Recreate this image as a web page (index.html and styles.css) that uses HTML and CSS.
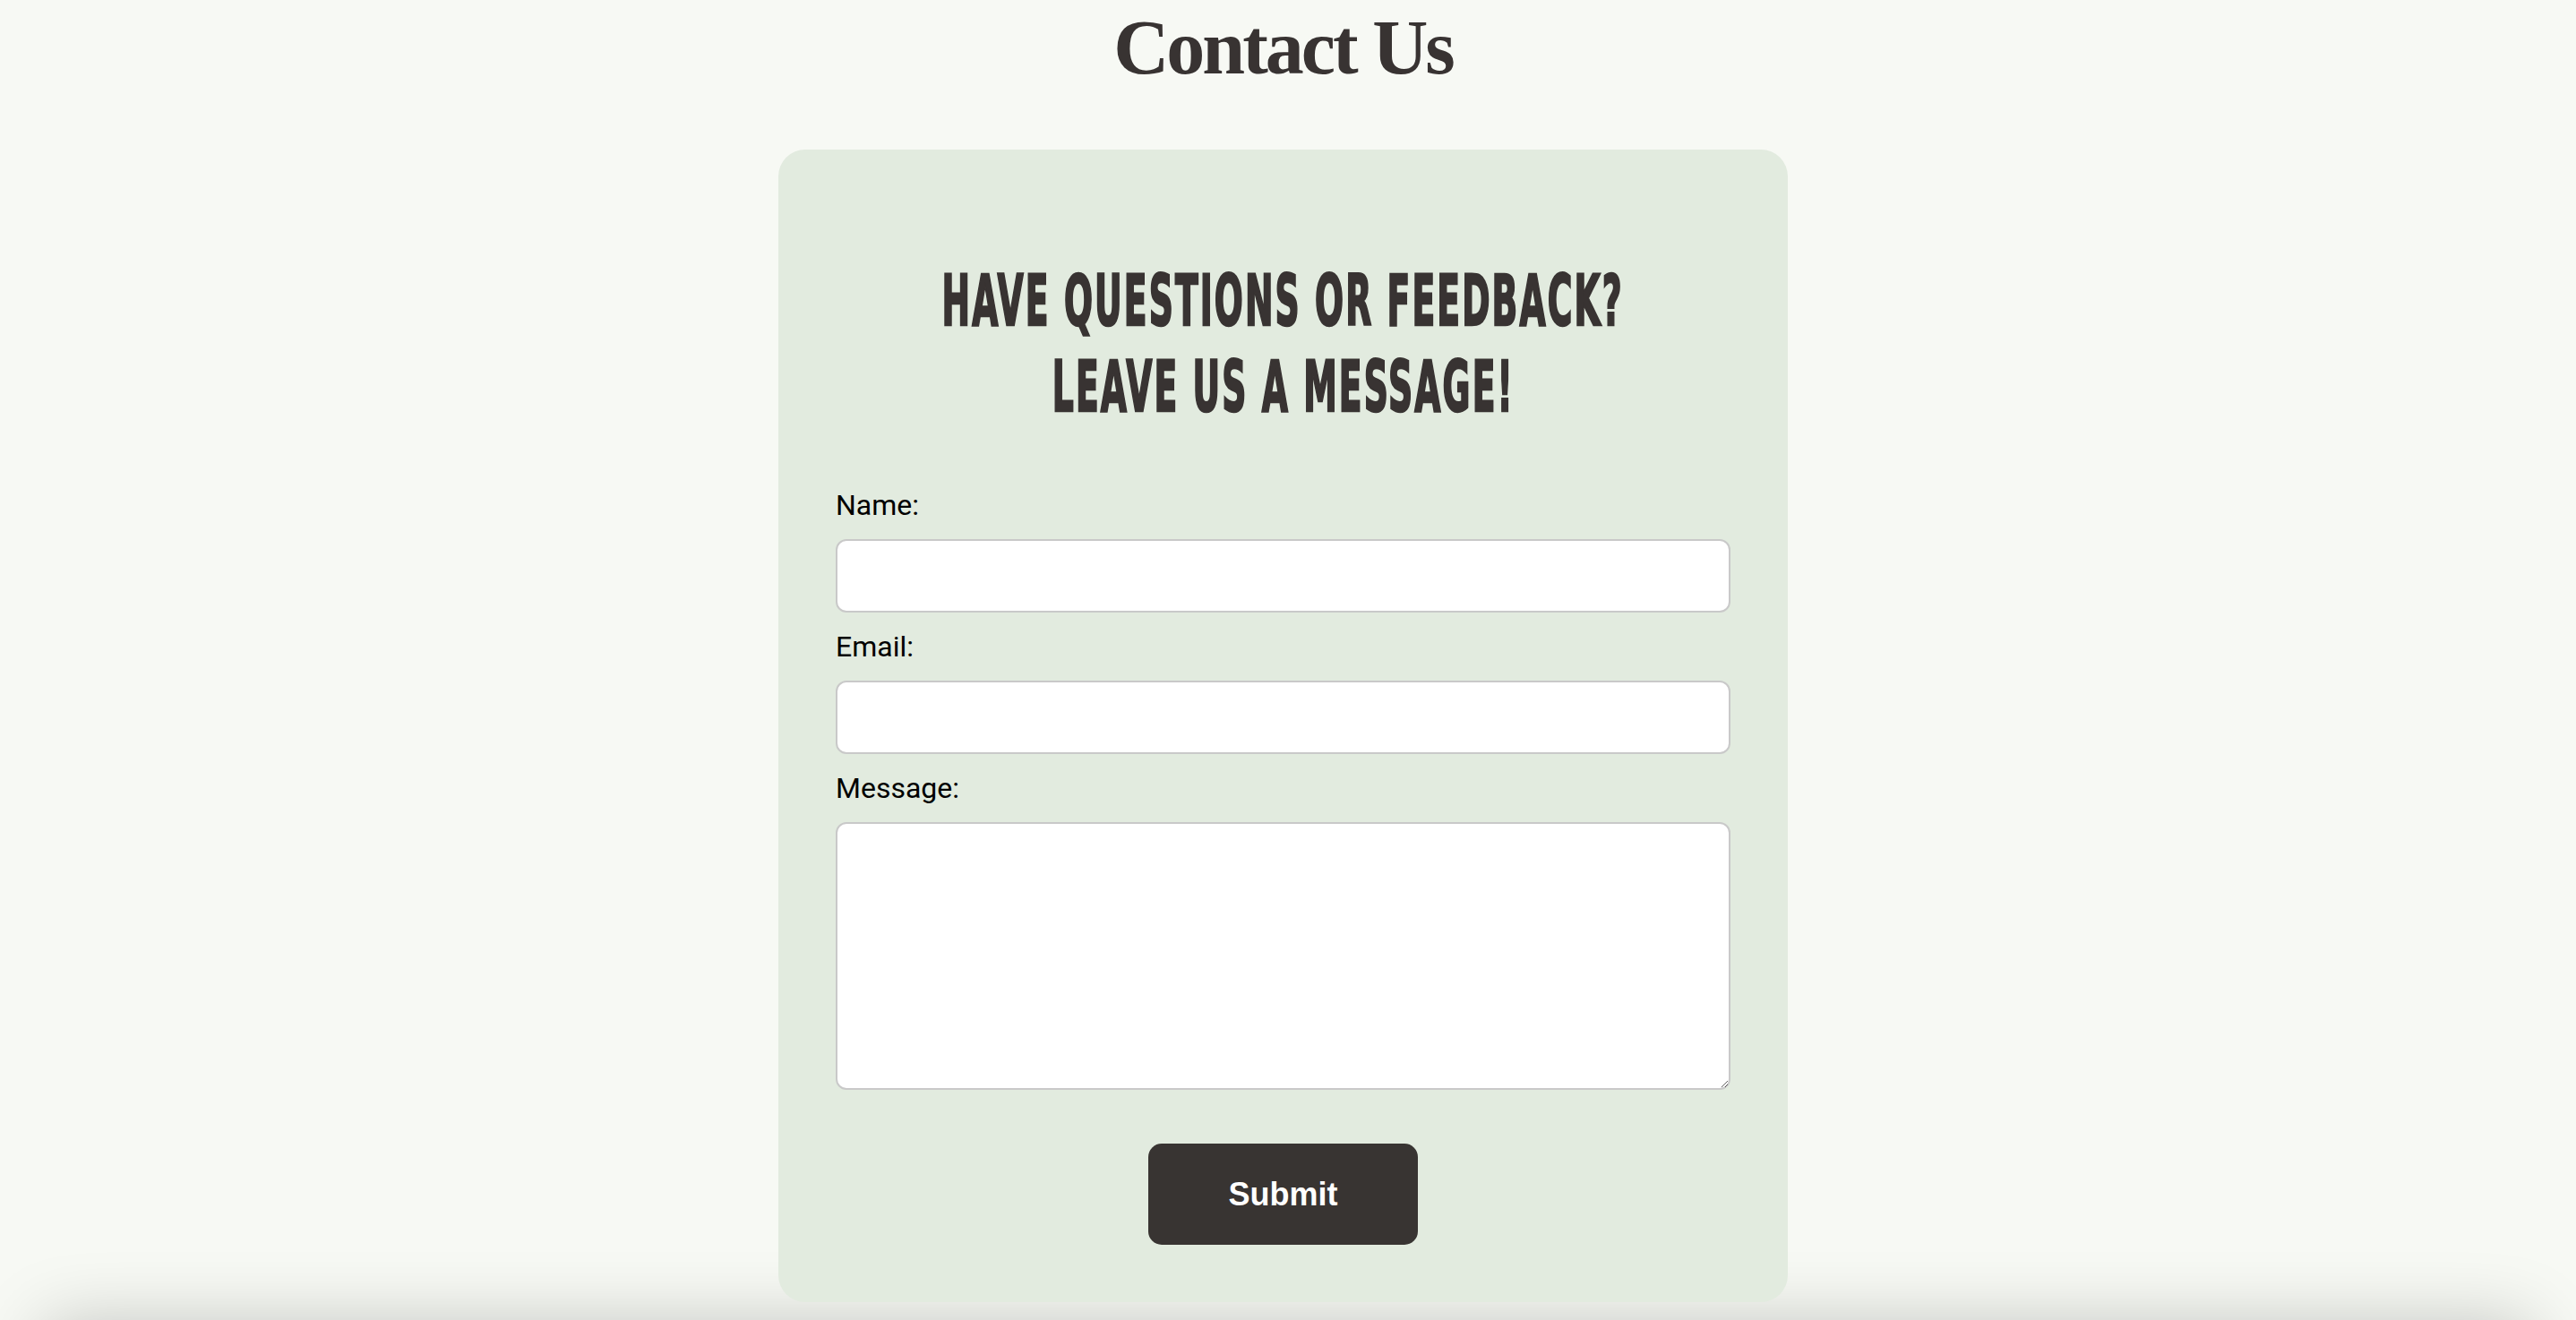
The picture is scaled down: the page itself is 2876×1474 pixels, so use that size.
FILE: index.html
```html
<!DOCTYPE html>
<html lang="en">
<head>
<meta charset="utf-8">
<title>Contact Us</title>
<link rel="stylesheet" href="styles.css">
</head>
<body>
<div class="page">
  <h1 class="title">Contact Us</h1>
  <section class="card">
    <h2 class="card-heading">
      <span class="line">HAVE QUESTIONS OR FEEDBACK?</span>
      <span class="line">LEAVE US A MESSAGE!</span>
    </h2>
    <form class="form">
      <label class="label" for="name">Name:</label>
      <input class="field" id="name" type="text">
      <label class="label" for="email">Email:</label>
      <input class="field" id="email" type="email">
      <label class="label" for="message">Message:</label>
      <textarea class="field area" id="message"></textarea>
      <div class="actions">
        <button class="submit" type="submit">Submit</button>
      </div>
    </form>
  </section>
</div>
<footer class="footer"></footer>
</body>
</html>
```

FILE: styles.css
```css
html, body {
  margin: 0;
  padding: 0;
}
body {
  background: #f7f9f4;
  color: #383332;
  font-family: Roboto, "Liberation Sans", sans-serif;
}
.page {
  display: flex;
  flex-direction: column;
  align-items: center;
  padding-right: 11px;
}
.title {
  margin: 3px 0 0;
  font-family: "Liberation Serif", "DejaVu Serif", serif;
  font-weight: 700;
  font-size: 86px;
  line-height: 100px;
  letter-spacing: -3px;
  color: #383332;
}
.card {
  box-sizing: border-box;
  width: 1127px;
  margin: 64px 0 24px;
  padding: 64px;
  background: #e2ebdf;
  border-radius: 30px;
}
.card-heading {
  display: flex;
  flex-direction: column;
  align-items: center;
  margin: 57px 0 65px;
  font-family: "DejaVu Sans Condensed", "DejaVu Sans", sans-serif;
  font-stretch: condensed;
  font-weight: 700;
  font-size: 79px;
  line-height: 96px;
  letter-spacing: 4px;
  color: #383332;
  -webkit-text-stroke: 2.5px #383332;
}
.line {
  display: block;
  white-space: nowrap;
  transform: scaleX(0.53);
  transform-origin: center;
}
.form {
  display: flex;
  flex-direction: column;
}
.label {
  display: block;
  font-family: Roboto, sans-serif;
  font-size: 32px;
  line-height: 38px;
  color: #000;
  margin-bottom: 19px;
}
.field {
  box-sizing: border-box;
  width: 100%;
  height: 82px;
  margin: 0 0 19px;
  border: 2px solid #c9c9c9;
  border-radius: 12px;
  background: #fff;
  font-family: Roboto, sans-serif;
  font-size: 32px;
  padding: 8px 16px;
}
.area {
  height: 299px;
  margin-bottom: 60px;
  resize: vertical;
}
.actions {
  display: flex;
  justify-content: center;
}
.submit {
  width: 301px;
  height: 113px;
  border: none;
  border-radius: 15px;
  background: #383432;
  color: #fff;
  font-family: "Liberation Sans", Arial, sans-serif;
  font-weight: 700;
  font-size: 36px;
}
.footer {
  height: 120px;
  margin: 0 50px;
  background: #f7f9f4;
  box-shadow: 0 0 80px rgba(0, 0, 0, 0.22);
}
```
